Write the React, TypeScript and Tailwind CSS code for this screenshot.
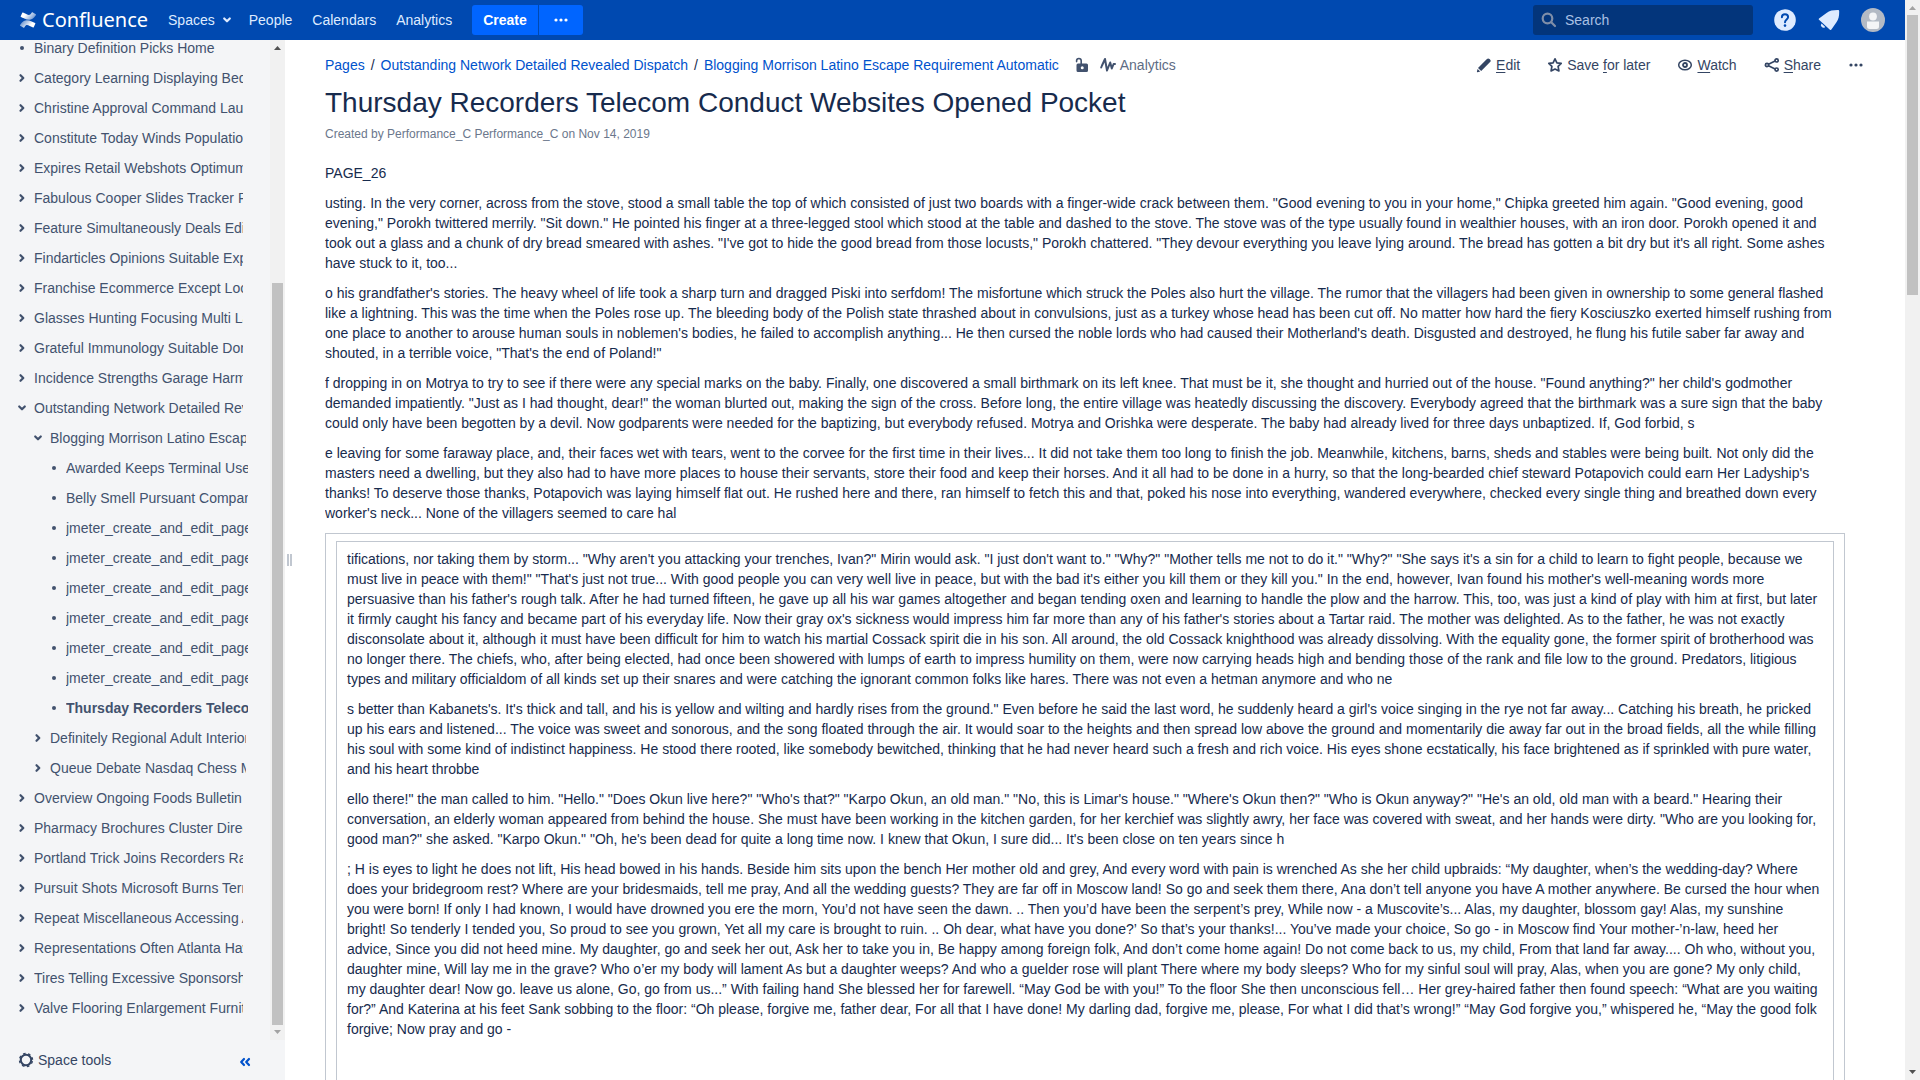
import React from "react";

type IconProps = { className?: string };

const ChevronRight = ({ className = "" }: IconProps) => (
  <svg viewBox="0 0 16 16" className={`size-4 shrink-0 ${className}`} fill="none" stroke="currentColor" strokeWidth="2.200" strokeLinecap="round" strokeLinejoin="round" aria-hidden="true">
    <path d="M6.500 5.200l2.800 2.800-2.800 2.800" />
  </svg>
);

const ChevronDown = ({ className = "" }: IconProps) => (
  <svg viewBox="0 0 16 16" className={`size-4 shrink-0 ${className}`} fill="none" stroke="currentColor" strokeWidth="2.200" strokeLinecap="round" strokeLinejoin="round" aria-hidden="true">
    <path d="M5.200 6.500l2.800 2.800 2.800-2.800" />
  </svg>
);

const Bullet = () => (
  <svg viewBox="0 0 16 16" className="size-4 shrink-0" fill="currentColor" aria-hidden="true">
    <circle cx="8" cy="8" r="2" />
  </svg>
);

const Dots = () => (
  <svg viewBox="0 0 16 16" className="size-4 shrink-0" fill="currentColor" aria-hidden="true">
    <circle cx="3" cy="8" r="1.600" />
    <circle cx="8" cy="8" r="1.600" />
    <circle cx="13" cy="8" r="1.600" />
  </svg>
);

const LogoMark = () => (
  <svg viewBox="0 0 24 24" className="size-4 shrink-0" aria-hidden="true">
    <defs>
      <linearGradient id="swooshBottom" x1="1" y1="0.7" x2="0.1" y2="0.3">
        <stop offset="0.3" stopColor="#fff" />
        <stop offset="1" stopColor="#fff" stopOpacity="0.45" />
      </linearGradient>
      <linearGradient id="swooshTop" x1="0" y1="0.3" x2="0.9" y2="0.7">
        <stop offset="0.3" stopColor="#fff" />
        <stop offset="1" stopColor="#fff" stopOpacity="0.45" />
      </linearGradient>
    </defs>
    <path fill="url(#swooshBottom)" d="M.87 18.257c-.248.382-.53.875-.763 1.245a.764.764 0 0 0 .255 1.04l4.965 3.054a.764.764 0 0 0 1.058-.26c.199-.332.454-.763.733-1.221 1.967-3.247 3.945-2.853 7.508-1.146l4.957 2.337a.764.764 0 0 0 1.028-.382l2.364-5.346a.764.764 0 0 0-.382-1 599.851 599.851 0 0 1-4.965-2.361C10.911 10.97 5.224 11.185.87 18.257z" />
    <path fill="url(#swooshTop)" d="M23.131 5.743c.249-.405.531-.875.764-1.25a.764.764 0 0 0-.256-1.034L18.675.404a.764.764 0 0 0-1.058.26c-.195.335-.451.763-.734 1.225-1.966 3.246-3.945 2.85-7.508 1.146L4.437.694a.764.764 0 0 0-1.027.382L1.046 6.422a.764.764 0 0 0 .382 1c1.039.49 3.105 1.467 4.965 2.361 6.698 3.246 12.392 3.029 16.738-4.04z" />
  </svg>
);

const Arrow = ({ up = false, muted = false }: { up?: boolean; muted?: boolean }) => (
  <svg viewBox="0 0 15 15" className={`size-[15px] shrink-0 ${muted ? "text-[#a3a3a3]" : "text-[#505050]"}`} fill="currentColor" aria-hidden="true">
    <path d={up ? "M4 10h7L7.500 6z" : "M4 5h7l-3.500 4z"} />
  </svg>
);

const topLevelBefore = [
  "Category Learning Displaying Bedroom",
  "Christine Approval Command Launch",
  "Constitute Today Winds Population",
  "Expires Retail Webshots Optimum",
  "Fabulous Cooper Slides Tracker Pop",
  "Feature Simultaneously Deals Edition",
  "Findarticles Opinions Suitable Expect",
  "Franchise Ecommerce Except Local",
  "Glasses Hunting Focusing Multi Lanes",
  "Grateful Immunology Suitable Donna",
  "Incidence Strengths Garage Harmony",
];

const leaves = [
  "Awarded Keeps Terminal User",
  "Belly Smell Pursuant Companies",
  "jmeter_create_and_edit_page",
  "jmeter_create_and_edit_page",
  "jmeter_create_and_edit_page",
  "jmeter_create_and_edit_page",
  "jmeter_create_and_edit_page",
  "jmeter_create_and_edit_page",
];

const topLevelAfter = [
  "Overview Ongoing Foods Bulletin",
  "Pharmacy Brochures Cluster Direct",
  "Portland Trick Joins Recorders Rapid",
  "Pursuit Shots Microsoft Burns Terms",
  "Repeat Miscellaneous Accessing Added",
  "Representations Often Atlanta Hawaii",
  "Tires Telling Excessive Sponsorship",
  "Valve Flooring Enlargement Furniture",
];

type Kind = "closed" | "open" | "leaf";

function TreeRow({ label, kind, width, bold = false }: { label: string; kind: Kind; width: string; bold?: boolean }) {
  return (
    <div className="flex h-[30px] shrink-0 items-center gap-1">
      {kind === "leaf" ? (
        <Bullet />
      ) : (
        <button type="button" aria-label={`Toggle ${label}`} aria-expanded={kind === "open"}>
          {kind === "open" ? <ChevronDown /> : <ChevronRight />}
        </button>
      )}
      <a href="#" className={`overflow-hidden whitespace-nowrap leading-5 ${width} ${bold ? "font-bold" : ""}`}>
        {label}
      </a>
    </div>
  );
}

const outerParagraphs = [
  "PAGE_26",
  `usting. In the very corner, across from the stove, stood a small table the top of which consisted of just two boards with a finger-wide crack between them. "Good evening to you in your home," Chipka greeted him again. "Good evening, good evening," Porokh twittered merrily. "Sit down." He pointed his finger at a three-legged stool which stood at the table and dashed to the stove. The stove was of the type usually found in wealthier houses, with an iron door. Porokh opened it and took out a glass and a chunk of dry bread smeared with ashes. "I've got to hide the good bread from those locusts," Porokh chattered. "They devour everything you leave lying around. The bread has gotten a bit dry but it's all right. Some ashes have stuck to it, too...`,
  `o his grandfather's stories. The heavy wheel of life took a sharp turn and dragged Piski into serfdom! The misfortune which struck the Poles also hurt the village. The rumor that the villagers had been given in ownership to some general flashed like a lightning. This was the time when the Poles rose up. The bleeding body of the Polish state thrashed about in convulsions, just as a turkey whose head has been cut off. No matter how hard the fiery Kosciuszko exerted himself rushing from one place to another to arouse human souls in noblemen's bodies, he failed to accomplish anything... He then cursed the noble lords who had caused their Motherland's death. Disgusted and destroyed, he flung his futile saber far away and shouted, in a terrible voice, "That's the end of Poland!"`,
  `f dropping in on Motrya to try to see if there were any special marks on the baby. Finally, one discovered a small birthmark on its left knee. That must be it, she thought and hurried out of the house. "Found anything?" her child's godmother demanded impatiently. "Just as I had thought, dear!" the woman blurted out, making the sign of the cross. Before long, the entire village was heatedly discussing the discovery. Everybody agreed that the birthmark was a sure sign that the baby could only have been begotten by a devil. Now godparents were needed for the baptizing, but everybody refused. Motrya and Orishka were desperate. The baby had already lived for three days unbaptized. If, God forbid, s`,
  `e leaving for some faraway place, and, their faces wet with tears, went to the corvee for the first time in their lives... It did not take them too long to finish the job. Meanwhile, kitchens, barns, sheds and stables were being built. Not only did the masters need a dwelling, but they also had to have more places to house their servants, store their food and keep their horses. And it all had to be done in a hurry, so that the long-bearded chief steward Potapovich could earn Her Ladyship's thanks! To deserve those thanks, Potapovich was laying himself flat out. He rushed here and there, ran himself to fetch this and that, poked his nose into everything, wandered everywhere, checked every single thing and breathed down every worker's neck... None of the villagers seemed to care hal`,
];

const innerParagraphs = [
  `tifications, nor taking them by storm... "Why aren't you attacking your trenches, Ivan?" Mirin would ask. "I just don't want to." "Why?" "Mother tells me not to do it." "Why?" "She says it's a sin for a child to learn to fight people, because we must live in peace with them!" "That's just not true... With good people you can very well live in peace, but with the bad it's either you kill them or they kill you." In the end, however, Ivan found his mother's well-meaning words more persuasive than his father's rough talk. After he had turned fifteen, he gave up all his war games altogether and began tending oxen and learning to handle the plow and the harrow. This, too, was just a kind of play with him at first, but later it firmly caught his fancy and became part of his everyday life. Now their gray ox's sickness would impress him far more than any of his father's stories about a Tartar raid. The mother was delighted. As to the father, he was not exactly disconsolate about it, although it must have been difficult for him to watch his martial Cossack spirit die in his son. All around, the old Cossack knighthood was already dissolving. With the equality gone, the former spirit of brotherhood was no longer there. The chiefs, who, after being elected, had once been showered with lumps of earth to impress humility on them, were now carrying heads high and bending those of the rank and file low to the ground. Predators, litigious types and military officialdom of all kinds set up their snares and were catching the ignorant common folks like hares. There was not even a hetman anymore and who ne`,
  `s better than Kabanets's. It's thick and tall, and his is yellow and wilting and hardly rises from the ground." Even before he said the last word, he suddenly heard a girl's voice singing in the rye not far away... Catching his breath, he pricked up his ears and listened... The voice was sweet and sonorous, and the song floated through the air. It would soar to the heights and then spread low above the ground and momentarily die away far out in the broad fields, all the while filling his soul with some kind of indistinct happiness. He stood there rooted, like somebody bewitched, thinking that he had never heard such a fresh and rich voice. His eyes shone ecstatically, his face brightened as if sprinkled with pure water, and his heart throbbe`,
  `ello there!" the man called to him. "Hello." "Does Okun live here?" "Who's that?" "Karpo Okun, an old man." "No, this is Limar's house." "Where's Okun then?" "Who is Okun anyway?" "He's an old, old man with a beard." Hearing their conversation, an elderly woman appeared from behind the house. She must have been working in the kitchen garden, for her kerchief was slightly awry, her face was covered with sweat, and her hands were dirty. "Who are you looking for, good man?" she asked. "Karpo Okun." "Oh, he's been dead for quite a long time now. I knew that Okun, I sure did... It's been close on ten years since h`,
  `; H is eyes to light he does not lift, His head bowed in his hands. Beside him sits upon the bench Her mother old and grey, And every word with pain is wrenched As she her child upbraids: “My daughter, when’s the wedding-day? Where does your bridegroom rest? Where are your bridesmaids, tell me pray, And all the wedding guests? They are far off in Moscow land! So go and seek them there, Ana don’t tell anyone you have A mother anywhere. Be cursed the hour when you were born! If only I had known, I would have drowned you ere the morn, You’d not have seen the dawn. .. Then you’d have been the serpent’s prey, While now - a Muscovite’s... Alas, my daughter, blossom gay! Alas, my sunshine bright! So tenderly I tended you, So proud to see you grown, Yet all my care is brought to ruin. .. Oh dear, what have you done?’ So that’s your thanks!... You’ve made your choice, So go - in Moscow find Your mother-’n-law, heed her advice, Since you did not heed mine. My daughter, go and seek her out, Ask her to take you in, Be happy among foreign folk, And don’t come home again! Do not come back to us, my child, From that land far away.... Oh who, without you, daughter mine, Will lay me in the grave? Who o’er my body will lament As but a daughter weeps? And who a guelder rose will plant There where my body sleeps? Who for my sinful soul will pray, Alas, when you are gone? My only child, my daughter dear! Now go. leave us alone, Go, go from us...” With failing hand She blessed her for farewell. “May God be with you!” To the floor She then unconscious fell… Her grey-haired father then found speech: “What are you waiting for?” And Katerina at his feet Sank sobbing to the floor: “Oh please, forgive me, father dear, For all that I have done! My darling dad, forgive me, please, For what I did that’s wrong!” “May God forgive you,” whispered he, “May the good folk forgive; Now pray and go -`,
];

function Header() {
  return (
    <header className="flex h-10 shrink-0 items-center bg-[#0049b0] pl-5 pr-5 text-[#deebff]">
      <a href="#" className="mr-5 flex items-center gap-1.5 text-white">
        <LogoMark />
        <span className="font-['Noto_Sans',sans-serif] text-[20px] leading-6">Confluence</span>
      </a>
      <nav className="flex items-center gap-5">
        <button type="button" className="-mr-1.5 flex items-center gap-1">
          Spaces
          <ChevronDown />
        </button>
        <a href="#">People</a>
        <a href="#">Calendars</a>
        <a href="#">Analytics</a>
      </nav>
      <div className="ml-5 flex h-[30px] gap-px text-white">
        <button type="button" className="rounded-l-[3px] bg-[#0065ff] px-[11px] font-bold">Create</button>
        <button type="button" aria-label="Create from template" className="flex items-center rounded-r-[3px] bg-[#0065ff] px-[14px]">
          <Dots />
        </button>
      </div>
      <label className="ml-auto flex h-[30px] w-[220px] items-center gap-2 rounded-[3px] bg-[#03357b] pl-2">
        <svg viewBox="0 0 16 16" className="size-4 shrink-0 text-[#7f8ea8]" fill="none" stroke="currentColor" strokeWidth="2.200" strokeLinecap="round" aria-hidden="true">
          <circle cx="6.500" cy="6.500" r="4.800" />
          <path d="M10.500 10.500l3.500 3.500" />
        </svg>
        <input type="text" placeholder="Search" aria-label="Search" className="w-44 bg-transparent outline-none placeholder:text-[#a9c0e4]" />
      </label>
      <div className="ml-5 flex items-center gap-5">
        <button type="button" aria-label="Help">
          <svg viewBox="0 0 24 24" className="size-6" aria-hidden="true">
            <circle cx="12" cy="12" r="10.800" fill="#deebff" />
            <path d="M8.900 9.300c0-1.900 1.300-3.100 3.100-3.100s3.100 1.100 3.100 2.900c0 2.300-3.100 2.500-3.100 5.200" fill="none" stroke="#0049b0" strokeWidth="2" strokeLinecap="round" />
            <circle cx="12" cy="17.600" r="1.300" fill="#0049b0" />
          </svg>
        </button>
        <button type="button" aria-label="Notifications">
          <svg viewBox="0 0 24 24" className="size-6" fill="#deebff" aria-hidden="true">
            <path d="M2 10.400 9.500 5C12.500 2.600 16 2 20.800 2c1 0 1.400.5 1.400 1.400 0 4.500-.5 7.600-2.900 11l-4.900 7.200c-.4.600-1 .6-1.500.1L2 11.800c-.5-.5-.5-1 0-1.400z" />
            <path d="M4.600 15.600a2.200 2.200 0 1 0 3.600 3.300z" />
          </svg>
        </button>
        <button type="button" aria-label="Profile">
          <svg viewBox="0 0 24 24" className="size-6" aria-hidden="true">
            <circle cx="12" cy="12" r="12" fill="#b3bac5" />
            <circle cx="12" cy="8.500" r="3.900" fill="#f4f5f7" />
            <path d="M6 13.500h12v5a2.500 2.500 0 0 1-2.500 2.500h-7A2.500 2.500 0 0 1 6 18.500z" fill="#f4f5f7" />
          </svg>
        </button>
      </div>
    </header>
  );
}

function Sidebar() {
  return (
    <aside className="flex w-[285px] shrink-0 flex-col bg-[#f4f5f7] text-[#42526e]">
      <div className="flex min-h-0 flex-1">
        <nav className="flex min-w-0 flex-1 flex-col justify-end overflow-hidden pb-[17px] pl-[14px]">
          <TreeRow label="Binary Definition Picks Home" kind="leaf" width="w-[209px]" />
          {topLevelBefore.map((t) => (
            <TreeRow key={t} label={t} kind="closed" width="w-[209px]" />
          ))}
          <TreeRow label="Outstanding Network Detailed Revealed Dispatch" kind="open" width="w-[209px]" />
          <div className="pl-4">
            <TreeRow label="Blogging Morrison Latino Escape Requirement Automatic" kind="open" width="w-[196px]" />
            <div className="pl-4">
              {leaves.map((t, i) => (
                <TreeRow key={i} label={t} kind="leaf" width="w-[182px]" />
              ))}
              <TreeRow label="Thursday Recorders Telecom Conduct" kind="leaf" width="w-[182px]" bold />
            </div>
            <TreeRow label="Definitely Regional Adult Interior" kind="closed" width="w-[196px]" />
            <TreeRow label="Queue Debate Nasdaq Chess Mature" kind="closed" width="w-[196px]" />
          </div>
          {topLevelAfter.map((t) => (
            <TreeRow key={t} label={t} kind="closed" width="w-[209px]" />
          ))}
        </nav>
        <div className="flex w-[15px] shrink-0 flex-col items-center bg-[#f1f1f1]">
          <Arrow up />
          <div className="flex-[228]" />
          <div className="w-[11px] flex-[742] bg-[#c1c1c1]" />
          <Arrow muted />
        </div>
      </div>
      <div className="flex h-10 shrink-0 items-center justify-between pl-[18px] pr-8">
        <button type="button" className="flex items-center gap-1 text-[#344563]">
          <svg viewBox="0 0 16 16" className="size-4" fill="none" stroke="currentColor" aria-hidden="true">
            <circle cx="8" cy="8" r="5.200" strokeWidth="2" />
            <circle cx="8" cy="8" r="6.500" strokeWidth="1.400" strokeDasharray="2.600 2.505" strokeDashoffset="-1.300" />
          </svg>
          Space tools
        </button>
        <button type="button" aria-label="Collapse sidebar" className="mt-1 text-[#0052cc]">
          <svg viewBox="0 0 16 16" className="size-4" fill="none" stroke="currentColor" strokeWidth="2.200" strokeLinecap="round" strokeLinejoin="round" aria-hidden="true">
            <path d="M7 5 4.200 8 7 11M12 5 9.200 8l2.800 3" />
          </svg>
        </button>
      </div>
    </aside>
  );
}

function Action({ icon, children }: { icon: React.ReactNode; children: React.ReactNode }) {
  return (
    <a href="#" className="flex items-center gap-1 px-[10px]">
      {icon}
      <span>{children}</span>
    </a>
  );
}

const U = ({ children }: { children: string }) => <span className="underline underline-offset-2">{children}</span>;

function Toolbar() {
  return (
    <div className="flex items-center gap-[7px] text-[#344563]">
      <Action
        icon={
          <svg viewBox="0 0 16 16" className="size-4" fill="currentColor" aria-hidden="true">
            <path d="M2 11 10.400 2.600a3 3 0 0 1 1.600-1.200c1.300 0 2.700 1.300 2.800 2.700a3 3 0 0 1-1.200 1.500L5.200 14zM1.600 12l2.600 2.500-2.600.7c-.5.100-.8-.2-.7-.7z" />
          </svg>
        }
      >
        <U>E</U>dit
      </Action>
      <Action
        icon={
          <svg viewBox="0 0 16 16" className="size-4" fill="none" stroke="currentColor" strokeWidth="1.700" strokeLinejoin="round" aria-hidden="true">
            <path d="M8 1.800l1.900 4 4.300.6-3.100 3 .8 4.500L8 12l-3.900 1.900.8-4.500-3.100-3 4.300-.6z" />
          </svg>
        }
      >
        Save <U>f</U>or later
      </Action>
      <Action
        icon={
          <svg viewBox="0 0 16 16" className="size-4" fill="none" stroke="currentColor" aria-hidden="true">
            <ellipse cx="8" cy="8" rx="6.300" ry="4.800" strokeWidth="1.500" />
            <circle cx="8" cy="8" r="2" strokeWidth="1.800" />
          </svg>
        }
      >
        <U>W</U>atch
      </Action>
      <Action
        icon={
          <svg viewBox="0 0 16 16" className="size-4" fill="none" stroke="currentColor" strokeWidth="1.700" aria-hidden="true">
            <circle cx="3" cy="8" r="1.600" />
            <circle cx="12.600" cy="3.400" r="1.600" />
            <circle cx="12.600" cy="12.600" r="1.600" />
            <path d="M4.500 7.300l6.600-3.200M4.500 8.700l6.600 3.200" />
          </svg>
        }
      >
        <U>S</U>hare
      </Action>
      <button type="button" aria-label="More actions" className="px-[10px]">
        <Dots />
      </button>
    </div>
  );
}

function Breadcrumbs() {
  return (
    <nav className="flex items-center text-[#172b4d]">
      <a href="#" className="text-[#0052cc]">Pages</a>
      <span className="mx-1.5">/</span>
      <a href="#" className="text-[#0052cc]">Outstanding Network Detailed Revealed Dispatch</a>
      <span className="mx-1.5">/</span>
      <a href="#" className="text-[#0052cc]">Blogging Morrison Latino Escape Requirement Automatic</a>
      <button type="button" aria-label="Unrestricted" className="ml-[15px] text-[#42526e]">
        <svg viewBox="0 0 16 16" className="size-4" aria-hidden="true">
          <path d="M2.600 4.600V3.800a2.300 2.300 0 0 1 4.600 0V7" fill="none" stroke="currentColor" strokeWidth="1.600" strokeLinecap="round" />
          <path fillRule="evenodd" fill="currentColor" d="M4 6.500h8.500A1.500 1.500 0 0 1 14 8v5.500a1.500 1.500 0 0 1-1.500 1.500H4a1.500 1.500 0 0 1-1.500-1.500V8A1.500 1.500 0 0 1 4 6.500zm4.250 2.700a1.500 1.500 0 1 0 0 3 1.500 1.500 0 0 0 0-3z" />
        </svg>
      </button>
      <a href="#" className="ml-[10px] flex items-center gap-1 text-[#5e6c84]">
        <svg viewBox="0 0 16 16" className="size-4 text-[#42526e]" fill="none" stroke="currentColor" strokeWidth="2" strokeLinecap="round" strokeLinejoin="round" aria-hidden="true">
          <path d="M1.200 10.500 2 8.500 5 2l2 11.500L10.200 5.500l1.600 6 1.800-4.500H15" />
        </svg>
        Analytics
      </a>
    </nav>
  );
}

export default function App() {
  return (
    <div className="flex h-screen overflow-hidden bg-white font-['Liberation_Sans',Arial,sans-serif] text-[14px] leading-5 text-[#172b4d]">
      <div className="flex min-w-0 flex-1 flex-col">
        <Header />
        <div className="flex min-h-0 flex-1">
          <Sidebar />
          <div role="separator" aria-orientation="vertical" className="flex w-10 shrink-0 items-center gap-px pl-0.5">
            <span className="h-3 w-0.5 bg-[#c1c7d0]" />
            <span className="h-3 w-0.5 bg-[#c1c7d0]" />
          </div>
          <main className="min-w-0 flex-1 overflow-hidden pt-[15px]">
            <div className="flex items-center justify-between pr-[31px]">
              <Breadcrumbs />
              <Toolbar />
            </div>
            <h1 className="mt-3 text-[28px] leading-8">Thursday Recorders Telecom Conduct Websites Opened Pocket</h1>
            <p className="mt-[5px] text-xs leading-5 text-[#6b778c]">Created by Performance_C Performance_C on Nov 14, 2019</p>
            <article className="mr-[60px] mt-[19px] flex flex-col gap-[10px]">
              {outerParagraphs.map((p) => (
                <p key={p.slice(0, 20)}>{p}</p>
              ))}
              <div className="border border-[#c1c7d0] px-[10px] py-[7px]">
                <div className="flex flex-col gap-[10px] border border-[#c1c7d0] px-[10px] pb-20 pt-[7px]">
                  {innerParagraphs.map((p) => (
                    <p key={p.slice(0, 20)}>{p}</p>
                  ))}
                </div>
              </div>
            </article>
          </main>
        </div>
      </div>
      <div className="flex w-[15px] shrink-0 flex-col items-center bg-[#f1f1f1]">
        <Arrow up muted />
        <div className="w-[11px] flex-[280] bg-[#c1c1c1]" />
        <div className="flex-[770]" />
        <Arrow />
      </div>
    </div>
  );
}
